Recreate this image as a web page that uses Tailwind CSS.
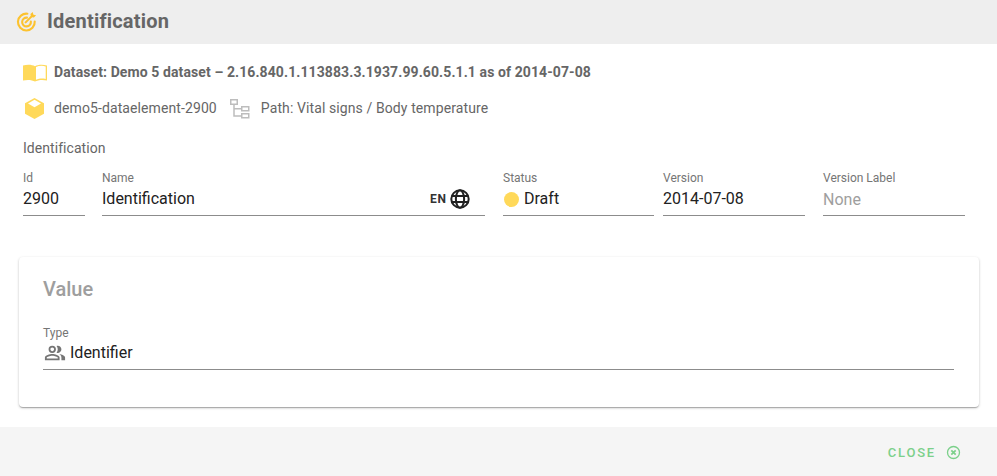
<!doctype html>
<html><head><meta charset="utf-8"><script src="https://cdn.jsdelivr.net/npm/@tailwindcss/browser@4"></script></head>
<body class="font-['Roboto',sans-serif] bg-white">
<div class="w-[997px] h-[476px] flex flex-col overflow-hidden bg-white">
  <header class="h-[44px] shrink-0 bg-[#eeeeee] flex items-center pl-[16px] gap-[10px] pb-[2px]">
    <svg width="21" height="21" viewBox="0 0 24 24" fill="none" stroke="#fcc22f" stroke-width="2.4" stroke-linecap="round">
      <path d="M13 3.100A9.600 9.600 0 1 0 21.400 12"/><path d="M12.500 7.600A5 5 0 1 0 17 12"/><path d="M11 13 19 5"/><path fill="#fcc22f" stroke="none" d="M16.500 3.500 19.200 1l.6 3.200 3.200.6-2.500 2.700-3.400-.6z"/>
    </svg>
    <span class="text-[20px] leading-none font-bold text-[#666666] tracking-[0.2px]">Identification</span>
  </header>
  <main class="h-[383px] shrink-0 flex flex-col">
    <div class="flex items-center pl-[23px] h-[20px] mt-[19px]">
      <svg width="24" height="18" viewBox="0 0 24 18"><path fill="#ffd95a" d="M0 1.500C4 .2 9 .4 12 2.200 15 .4 20 .2 24 1.500v15c-4-1-9-.8-12 1-3-1.800-8-2-12-1z"/><path fill="#fff" d="M13 3c2.800-1.400 6.500-1.500 9.700-.6v12.500c-3.200-.6-6.900-.4-9.700.8z"/></svg>
      <span class="ml-[7px] pb-[2px] text-[14px] font-bold text-[#666666] tracking-[0.1px]">Dataset: Demo 5 dataset – 2.16.840.1.113883.3.1937.99.60.5.1.1 as of 2014-07-08</span>
    </div>
    <div class="flex items-center pl-[25px] h-[20px] mt-[15px] text-[14px] text-[#666666] tracking-[0.1px]">
      <svg width="19" height="21" viewBox="0 0 19 21"><path fill="#ffd95a" d="M9.500 0 19 5.300v10.400L9.500 21 0 15.700V5.300z"/><path fill="#fff" d="M9.500 1.800 16 5.500 9.500 9.200 3 5.500z"/></svg>
      <span class="ml-[10px]">demo5-dataelement-2900</span>
      <svg class="ml-[12px]" width="21" height="21" viewBox="0 0 21 21" fill="none" stroke="#bdbdbd" stroke-width="1.500"><rect x="1.750" y="1.750" width="6.500" height="4.500"/><rect x="12.750" y="8.750" width="7" height="4"/><rect x="12.750" y="15.750" width="7" height="4"/><path d="M5 6v12h7.500M5 10.750h7.500"/></svg>
      <span class="ml-[11px]">Path: Vital signs / Body temperature</span>
    </div>
    <div class="pl-[23px] mt-[22px] h-[17px] text-[14px] leading-[17px] text-[#666666] tracking-[0.05px]">Identification</div>
    <div class="flex pl-[23px] mt-[14px] gap-[17px]">
      <div class="w-[62px] h-[45px] border-b border-[#8c8c8c]">
        <div class="text-[12px] leading-[14px] text-[#757575]">Id</div>
        <div class="text-[16px] leading-[20px] mt-[4px] text-[#212121]">2900</div>
      </div>
      <div class="w-[383px] mr-[1px] h-[45px] border-b border-[#8c8c8c] relative">
        <div class="text-[12px] leading-[14px] text-[#757575]">Name</div>
        <div class="text-[16px] leading-[20px] mt-[4px] text-[#212121]">Identification</div>
        <div class="absolute right-[14px] top-[17px] flex items-center gap-[2px]">
          <span class="text-[12px] font-bold tracking-[0.9px] text-[#333333]">EN</span>
          <svg width="22" height="22" viewBox="0 0 24 24" fill="none" stroke="#212121" stroke-width="2.200"><circle cx="12" cy="12" r="9.500"/><ellipse cx="12" cy="12" rx="4.500" ry="9.500"/><path d="M3 8.800h18M3 15.200h18"/></svg>
        </div>
      </div>
      <div class="w-[151px] h-[45px] border-b border-[#8c8c8c]">
        <div class="text-[12px] leading-[14px] text-[#757575]">Status</div>
        <div class="flex items-center mt-[4px] h-[20px]">
          <span class="ml-px size-[15px] rounded-full bg-[#ffd95a]"></span>
          <span class="ml-[5px] text-[16px] leading-[20px] text-[#212121]">Draft</span>
        </div>
      </div>
      <div class="w-[142px] mr-[1px] h-[45px] -ml-[8px] border-b border-[#8c8c8c]">
        <div class="text-[12px] leading-[14px] text-[#757575]">Version</div>
        <div class="text-[16px] leading-[20px] mt-[4px] text-[#212121]">2014-07-08</div>
      </div>
      <div class="w-[142px] h-[45px] border-b border-[#8c8c8c]">
        <div class="text-[12px] leading-[14px] text-[#757575]">Version Label</div>
        <div class="text-[16px] leading-[20px] mt-[5px] text-[#9e9e9e]">None</div>
      </div>
    </div>
    <section class="ml-[19px] mt-[41px] w-[960px] h-[150px] rounded-[4px] bg-white shadow-[0_1px_3px_0_rgba(0,0,0,0.2),0_1px_1px_0_rgba(0,0,0,0.14),0_2px_1px_-1px_rgba(0,0,0,0.12)] pt-[20px] pl-[24px] pr-[25px]">
      <div class="text-[20px] leading-[24px] font-medium text-[#9e9e9e]">Value</div>
      <div class="mt-[25px] h-[44px] border-b border-[#8c8c8c]">
        <div class="text-[12px] leading-[14px] text-[#757575]">Type</div>
        <div class="flex items-center mt-[3px] h-[20px]">
          <svg class="ml-[1px]" width="22" height="22" viewBox="0 0 24 24" fill="#757575"><path d="M16.670 13.130C18.040 14.060 19 15.320 19 17v3h4v-3c0-2.180-3.570-3.470-6.330-3.870z"/><path fill-rule="evenodd" d="M9 12a4 4 0 1 0 0-8 4 4 0 0 0 0 8zm0-6c1.100 0 2 .9 2 2s-.9 2-2 2-2-.9-2-2 .9-2 2-2z"/><path d="M15 12c2.210 0 4-1.790 4-4s-1.790-4-4-4c-.47 0-.91.1-1.330.24C14.500 5.270 15 6.580 15 8s-.5 2.730-1.330 3.760c.42.14.86.24 1.330.24z"/><path fill-rule="evenodd" d="M9 13c-2.670 0-8 1.340-8 4v3h16v-3c0-2.660-5.330-4-8-4zm6 5H3v-.99C3.200 16.290 6.300 15 9 15s5.800 1.290 6 2V18z"/></svg>
          <span class="ml-[4px] text-[16px] leading-[20px] text-[#212121]">Identifier</span>
        </div>
      </div>
    </section>
  </main>
  <footer class="flex-1 bg-[#f5f5f5] flex items-center justify-end pr-[36px] gap-[10px] pt-[2px]">
    <span class="text-[13px] font-medium tracking-[1.8px] text-[#7bd08a]">CLOSE</span>
    <svg width="15" height="15" viewBox="0 0 15 15" fill="none" stroke="#7bd08a" stroke-width="1.300"><circle cx="7.500" cy="7.500" r="6"/><path stroke-width="1.700" d="M5.300 5.300l4.400 4.400M9.700 5.300l-4.400 4.400"/></svg>
  </footer>
</div>
</body></html>
